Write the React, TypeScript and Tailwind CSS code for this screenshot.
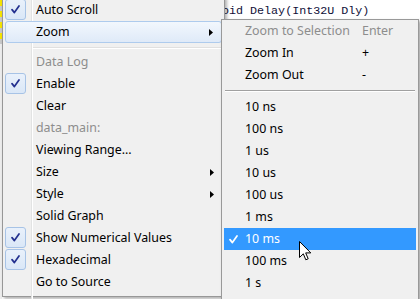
import { Fragment } from "react";

type TMainItem =
	| { kind: "sep" }
	| { kind: "item"; label: string; checked?: boolean; disabled?: boolean; sub?: boolean; active?: boolean };

type TSubItem =
	| { kind: "sep" }
	| { kind: "item"; label: string; shortcut?: string; disabled?: boolean; checked?: boolean };

const MAIN: TMainItem[] = [
	{ kind: "item", label: "Auto Scroll", checked: true },
	{ kind: "item", label: "Zoom", sub: true, active: true },
	{ kind: "sep" },
	{ kind: "item", label: "Data Log", disabled: true },
	{ kind: "item", label: "Enable", checked: true },
	{ kind: "item", label: "Clear" },
	{ kind: "item", label: "data_main:", disabled: true },
	{ kind: "item", label: "Viewing Range..." },
	{ kind: "item", label: "Size", sub: true },
	{ kind: "item", label: "Style", sub: true },
	{ kind: "item", label: "Solid Graph" },
	{ kind: "item", label: "Show Numerical Values", checked: true },
	{ kind: "item", label: "Hexadecimal", checked: true },
	{ kind: "item", label: "Go to Source" },
];

const SUB: TSubItem[] = [
	{ kind: "item", label: "Zoom to Selection", shortcut: "Enter", disabled: true },
	{ kind: "item", label: "Zoom In", shortcut: "+" },
	{ kind: "item", label: "Zoom Out", shortcut: "-" },
	{ kind: "sep" },
	{ kind: "item", label: "10 ns" },
	{ kind: "item", label: "100 ns" },
	{ kind: "item", label: "1 us" },
	{ kind: "item", label: "10 us" },
	{ kind: "item", label: "100 us" },
	{ kind: "item", label: "1 ms" },
	{ kind: "item", label: "10 ms", checked: true },
	{ kind: "item", label: "100 ms" },
	{ kind: "item", label: "1 s" },
];

function Tick({ color }: { color: string }) {
	return (
		<svg width="9" height="9" viewBox="0 0 9 9">
			<path d="M1 4.6 L3.4 7.6 L8 1" fill="none" stroke={color} strokeWidth="1.7" strokeLinecap="round" strokeLinejoin="round" />
		</svg>
	);
}

function Arrow() {
	return (
		<svg width="4" height="7" viewBox="0 0 4 7">
			<polygon points="0,0 4,3.5 0,7" fill="#000" />
		</svg>
	);
}

function MainMenu() {
	return (
		<div className="absolute left-[2px] top-[-4px] w-[223px] h-[301px] border border-[#979797] bg-[#f0f0f0] p-[2px] shadow-[2px_2px_3px_rgba(0,0,0,0.3)]">
			<div className="relative">
				<div className="absolute left-[26px] top-0 h-[300px] w-[2px] border-l border-[#e2e3e3] border-r border-r-white" />
				{MAIN.map((it, i) =>
					it.kind === "sep" ? (
						<div key={i} className="h-[8px] pt-[4px] pl-[28px]">
							<div className="h-[2px] border-t border-[#e0e0e0] border-b border-b-white" />
						</div>
					) : (
						<div
							key={i}
							className={
								"relative flex h-[22px] items-center rounded-[3px] " +
								(it.active ? "border border-[#aecbed] bg-gradient-to-b from-[#f2f7fd] to-[#dfeaf8]" : "")
							}
						>
							<div className="flex w-[31px] shrink-0 self-stretch">
								{it.checked && (
									<div className="flex h-[21px] w-[21px] items-center justify-center rounded-[3px] border border-[#a7c3e6] bg-gradient-to-b from-[#e9f1fb] to-[#dae7f7]">
										<Tick color="#23308f" />
									</div>
								)}
							</div>
							<span className={(it.disabled ? "text-[#8d8d8d]" : "text-black") + (it.active ? " -ml-px" : "")}>
								{it.label}
							</span>
							{it.sub && (
								<span className="ml-auto mr-[8px] flex">
									<Arrow />
								</span>
							)}
						</div>
					)
				)}
			</div>
		</div>
	);
}

function SubMenu() {
	return (
		<div className="absolute left-[221px] top-[19px] w-[198px] h-[290px] border border-[#999999] bg-[#f0f0f0] px-[2px] shadow-[2px_2px_3px_rgba(0,0,0,0.35)]">
			{SUB.map((it, i) =>
				it.kind === "sep" ? (
					<div key={i} className="h-[10px] pt-[4px] px-px">
						<div className="h-[2px] border-t border-[#a0a0a0] border-b border-b-white" />
					</div>
				) : (
					<div
						key={i}
						className={"flex h-[22px] items-center " + (it.checked ? "bg-[#3399ff] text-white" : it.disabled ? "text-[#8d8d8d]" : "text-black")}
					>
						<div className="flex w-[21px] shrink-0 pl-[5px]">{it.checked && <Tick color="#ffffff" />}</div>
						<span className="w-[117px] shrink-0">{it.label}</span>
						{it.shortcut && <span>{it.shortcut}</span>}
					</div>
				)
			)}
		</div>
	);
}

function Cursor() {
	return (
		<svg className="absolute left-[299px] top-[241px]" width="13" height="21" viewBox="0 0 13 21">
			<path
				d="M0.5 0.5 L0.5 16.5 L4.3 12.8 L6.8 18.8 L9.2 17.8 L6.7 11.9 L11.8 11.9 Z"
				fill="#ffffff"
				stroke="#000000"
				strokeWidth="1"
				strokeLinejoin="miter"
			/>
		</svg>
	);
}

export default function App() {
	return (
		<div className="relative h-[299px] w-[420px] overflow-hidden bg-white font-['Noto_Sans','Liberation_Sans',sans-serif] text-[12.4px] leading-none">
			<div className="flex h-full">
				<div className="flex w-[2px] shrink-0 flex-col bg-[#ececec]">
					{[0, 1, 2, 3].map((n) => (
						<Fragment key={n}>
							<div className="h-[6px] bg-[#f5e400]" />
							<div className="h-[5px] bg-[#c8c8c8]" />
						</Fragment>
					))}
				</div>
				<div className="pl-[213px] pt-[6px] font-['Liberation_Mono',monospace] text-[11.7px] text-[#101038] whitespace-pre">
					void Delay(Int32U Dly)
				</div>
			</div>
			<MainMenu />
			<SubMenu />
			<Cursor />
		</div>
	);
}
